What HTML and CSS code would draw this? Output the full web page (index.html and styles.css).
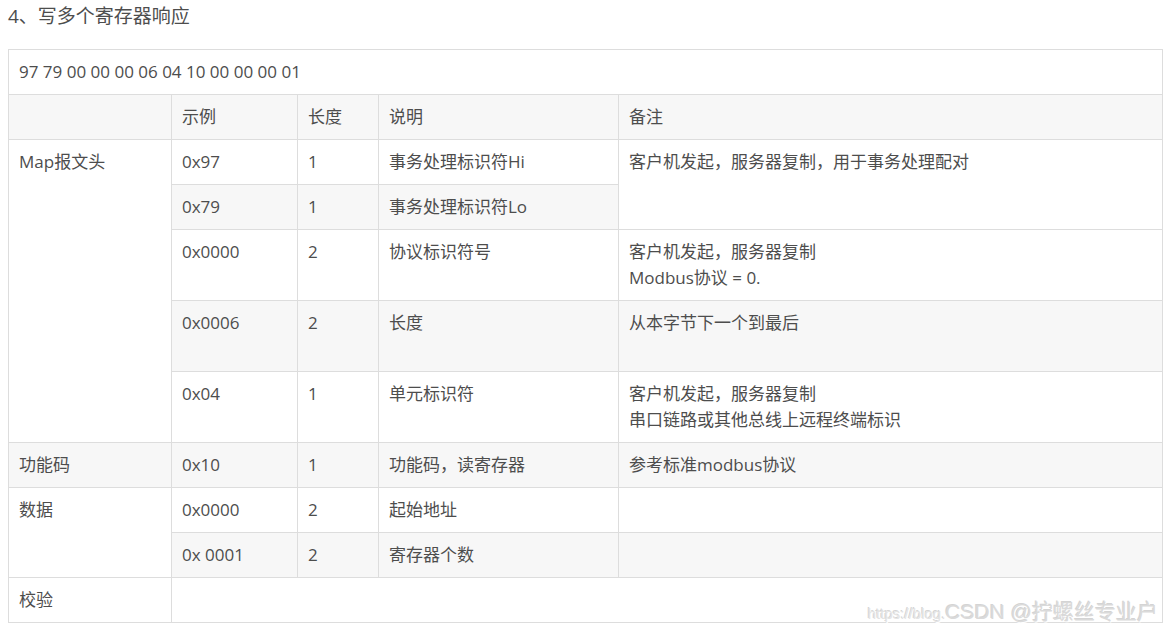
FILE: index.html
```html
<!DOCTYPE html>
<html lang="zh-CN">
<head>
<meta charset="utf-8">
<title>写多个寄存器响应</title>
<link rel="stylesheet" href="styles.css">
</head>
<body>
<div class="page">
  <h4 class="title">4、写多个寄存器响应</h4>
  <div class="table-wrap">
    <table class="grid">
      <colgroup>
        <col class="c1"><col class="c2"><col class="c3"><col class="c4"><col class="c5">
      </colgroup>
      <tbody>
        <tr><td colspan="5">97 79 00 00 00 06 04 10 00 00 00 01</td></tr>
        <tr><td></td><td>示例</td><td>长度</td><td>说明</td><td>备注</td></tr>
        <tr><td rowspan="5">Map报文头</td><td>0x97</td><td>1</td><td>事务处理标识符Hi</td><td rowspan="2">客户机发起，服务器复制，用于事务处理配对</td></tr>
        <tr><td>0x79</td><td>1</td><td>事务处理标识符Lo</td></tr>
        <tr><td>0x0000</td><td>2</td><td>协议标识符号</td><td>客户机发起，服务器复制<br>Modbus协议 = 0.</td></tr>
        <tr><td>0x0006</td><td>2</td><td>长度</td><td>从本字节下一个到最后<br>&nbsp;</td></tr>
        <tr><td>0x04</td><td>1</td><td>单元标识符</td><td>客户机发起，服务器复制<br>串口链路或其他总线上远程终端标识</td></tr>
        <tr><td>功能码</td><td>0x10</td><td>1</td><td>功能码，读寄存器</td><td>参考标准modbus协议</td></tr>
        <tr><td rowspan="2">数据</td><td>0x0000</td><td>2</td><td>起始地址</td><td></td></tr>
        <tr><td>0x 0001</td><td>2</td><td>寄存器个数</td><td></td></tr>
        <tr><td>校验</td><td colspan="4"></td></tr>
      </tbody>
    </table>
    <div class="watermark"><span class="wm-url">https://blog.</span><span class="wm-name">CSDN @拧螺丝专业户</span></div>
  </div>
</div>
</body>
</html>
```

FILE: styles.css
```css
html, body {
  margin: 0;
  padding: 0;
  background: #ffffff;
}
body {
  font-family: "Open Sans", "Noto Sans CJK SC", sans-serif;
  color: #4d4d4d;
}
.page {
  padding: 1px 8px 0 8px;
}
.title {
  margin: 0;
  font-size: 19px;
  line-height: 30px;
  font-weight: normal;
  color: #4d4d4d;
}
.table-wrap {
  position: relative;
  margin-top: 18px;
  width: 1153px;
}
.grid {
  border-collapse: collapse;
  table-layout: fixed;
  width: 1154px;
  font-size: 17px;
  line-height: 26px;
}
.c1 { width: 163px; }
.c2 { width: 126px; }
.c3 { width: 81px; }
.c4 { width: 240px; }
.c5 { width: 544px; }
.grid td {
  border: 1px solid #dddddd;
  padding: 9px 10px;
  vertical-align: top;
  text-align: left;
  height: 26px;
}
.grid tr:nth-child(even) {
  background: #f7f7f7;
}
.watermark {
  position: absolute;
  right: 3px;
  bottom: -2px;
  white-space: nowrap;
  font-family: "Liberation Sans", "Noto Sans CJK SC", sans-serif;
  text-shadow: 1px 1px 0 #ffffff, -1px -1px 0 #d4d4d4;
}
.wm-url {
  font-size: 15px;
  color: #e4e4e4;
}
.wm-name {
  font-size: 21px;
  color: #dadada;
}
```
